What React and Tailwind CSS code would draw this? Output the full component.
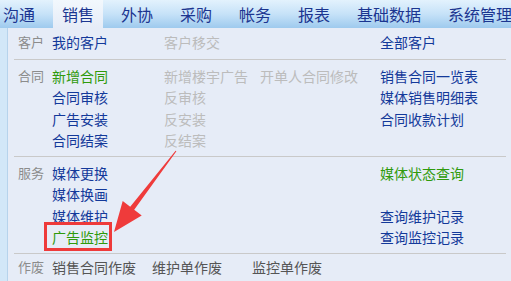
import React from 'react';

const tabs = ['沟通', '销售', '外协', '采购', '帐务', '报表', '基础数据', '系统管理'];

const C = {
  blue: 'text-[#13399a]',
  green: 'text-[#2f9a0c]',
  gray: 'text-[#bcbcbc]',
};

const Item = ({ t, c = 'blue', boxed = false }) => {
  if (!t) return <div className="h-[21.5px]" />;
  return (
    <div className="h-[21.5px] leading-[21.5px] whitespace-nowrap">
      <span className={`relative ${C[c]}`}>
        {t}
        {boxed && (
          <span className="absolute -left-[8px] -right-[4px] -top-[5px] -bottom-[4px] border-[3px] border-[#ee3a3a]" />
        )}
      </span>
    </div>
  );
};

const Section = ({ label, cols, pt = 'pt-[6px]', pb = 'pb-[4px]', last = false }) => (
  <div className={`flex ml-[6px] mr-[5px] ${pt} ${pb} ${last ? '' : 'border-b border-[#c9c9c9]'}`}>
    <div className="w-[38px] pl-[4px] h-[21.5px] leading-[20px] text-[13px] text-[#8c8c8c]">{label}</div>
    {cols.map((col, i) => (
      <div key={i} className={['w-[112px]', 'w-[96px]', 'w-[120px]', 'flex-1'][i]}>
        {col.map((it, j) => (
          <Item key={j} {...it} />
        ))}
      </div>
    ))}
  </div>
);

export default function App() {
  return (
    <div className="relative w-[511px] h-[281px] overflow-hidden bg-[#e6ecf7] font-['Noto_Sans_CJK_SC','Noto_Sans',sans-serif] text-[14px]">
      {/* top tab bar */}
      <div className="h-[28px] flex gap-[27px] pl-[3px] bg-gradient-to-b from-[#e3f2fd] via-[#c6e2f8] to-[#9ecaee] text-[16px] text-[#1b3590]">
        {tabs.map((t) => (
          <div
            key={t}
            className={`shrink-0 leading-[28px] whitespace-nowrap ${
              t === '销售' ? '-mx-[9px] px-[9px] bg-gradient-to-b from-[#f2f8fd] to-[#e6ecf7]' : ''
            }`}
          >
            {t}
          </div>
        ))}
      </div>

      <div className="flex h-[253px]">
        {/* left strip */}
        <div className="w-[8px] bg-[#d2e7f8] border-r border-[#b6d3ec]" />

        <div className="flex-1">
          <Section
            label="客户"
            pt="pt-[4px]"
            pb="pb-[5px]"
            cols={[[{ t: '我的客户' }], [{ t: '客户移交', c: 'gray' }], [{}], [{ t: '全部客户' }]]}
          />
          <Section
            label="合同"
            cols={[
              [{ t: '新增合同', c: 'green' }, { t: '合同审核' }, { t: '广告安装' }, { t: '合同结案' }],
              [
                { t: '新增楼宇广告', c: 'gray' },
                { t: '反审核', c: 'gray' },
                { t: '反安装', c: 'gray' },
                { t: '反结案', c: 'gray' },
              ],
              [{ t: '开单人合同修改', c: 'gray' }],
              [{ t: '销售合同一览表' }, { t: '媒体销售明细表' }, { t: '合同收款计划' }],
            ]}
          />
          <Section
            label="服务"
            cols={[
              [{ t: '媒体更换' }, { t: '媒体换画' }, { t: '媒体维护' }, { t: '广告监控', c: 'green', boxed: true }],
              [],
              [],
              [{ t: '媒体状态查询', c: 'green' }, {}, { t: '查询维护记录' }, { t: '查询监控记录' }],
            ]}
          />
          <div className="flex ml-[6px] pt-[3px]">
            <div className="w-[38px] pl-[4px] h-[21.5px] leading-[20px] text-[13px] text-[#8c8c8c]">作废</div>
            {['销售合同作废', '维护单作废', '监控单作废'].map((t) => (
              <div key={t} className="w-[100px] h-[21.5px] leading-[21.5px] text-[#555555] whitespace-nowrap">
                {t}
              </div>
            ))}
          </div>
        </div>
      </div>

      {/* red annotation arrow */}
      <svg className="absolute inset-0 pointer-events-none" width="511" height="281" viewBox="0 0 511 281">
        <polygon
          points="175.6,150.7 176.4,151.3 134.2,209.7 141.7,215.5 114,232 122.7,200.9 130.2,206.7"
          fill="#ef3b3b"
        />
      </svg>
    </div>
  );
}
